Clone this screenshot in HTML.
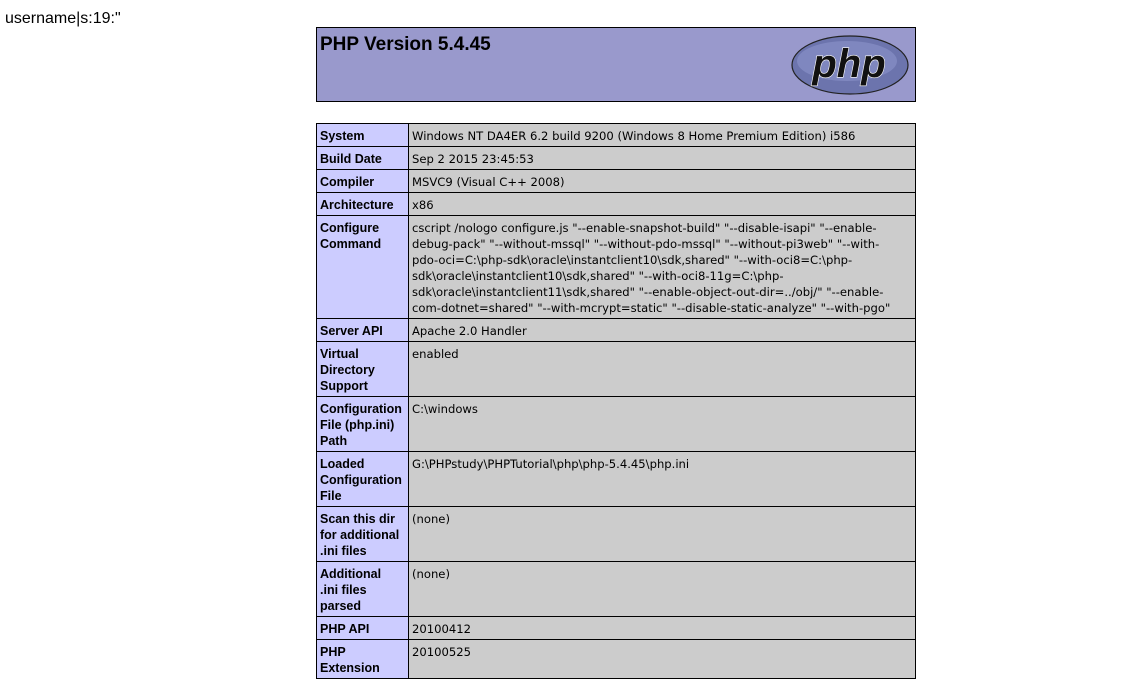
<!DOCTYPE html>
<html><head><meta charset="utf-8"><style>
body{margin:0;background:#fff;font-family:"Liberation Sans",sans-serif;}
.u{position:absolute;left:5px;top:10px;font-size:16px;color:#000;}
.h{position:absolute;left:316px;top:27px;width:598px;height:73px;background:#9999cc;border:1px solid #000;}
.h h1{margin:0;position:absolute;left:3px;top:6px;font-size:19px;font-weight:bold;}
.h svg{position:absolute;right:4px;top:7px;}
table{position:absolute;left:316px;top:123px;width:600px;border-collapse:collapse;}
td{border:1px solid #000;padding:4px 3px 2px 3px;vertical-align:top;line-height:16px;font-size:12px;}
td.e{background:#ccccff;font-weight:bold;width:85px;font-family:"Liberation Sans",sans-serif;font-size:12.5px;}
td.v{background:#cccccc;font-family:"DejaVu Sans",sans-serif;font-size:11.6px;}
.nw{white-space:nowrap;}
</style></head><body>
<div class="u">username|s:19:"</div>
<div class="h"><h1>PHP Version 5.4.45</h1>
<svg width="120" height="60" viewBox="0 0 120 60"><ellipse cx="59" cy="30" rx="58" ry="29" fill="#6c74ad" stroke="#222" stroke-width="1.2"/><ellipse cx="56" cy="26" rx="50" ry="20" fill="#7f87bf"/><text x="58" y="42" text-anchor="middle" font-family="Liberation Sans,sans-serif" font-weight="bold" font-style="italic" font-size="40" fill="#111" stroke="#fff" stroke-width="1.2" paint-order="stroke">php</text></svg></div>
<table>
<tr><td class="e">System</td><td class="v">Windows NT DA4ER 6.2 build 9200 (Windows 8 Home Premium Edition) i586</td></tr>
<tr><td class="e">Build Date</td><td class="v">Sep 2 2015 23:45:53</td></tr>
<tr><td class="e">Compiler</td><td class="v">MSVC9 (Visual C++ 2008)</td></tr>
<tr><td class="e">Architecture</td><td class="v">x86</td></tr>
<tr><td class="e">Configure Command</td><td class="v nw">cscript /nologo configure.js "--enable-snapshot-build" "--disable-isapi" "--enable-<br>debug-pack" "--without-mssql" "--without-pdo-mssql" "--without-pi3web" "--with-<br>pdo-oci=C:\php-sdk\oracle\instantclient10\sdk,shared" "--with-oci8=C:\php-<br>sdk\oracle\instantclient10\sdk,shared" "--with-oci8-11g=C:\php-<br>sdk\oracle\instantclient11\sdk,shared" "--enable-object-out-dir=../obj/" "--enable-<br>com-dotnet=shared" "--with-mcrypt=static" "--disable-static-analyze" "--with-pgo"</td></tr>
<tr><td class="e">Server API</td><td class="v">Apache 2.0 Handler</td></tr>
<tr><td class="e">Virtual Directory Support</td><td class="v">enabled</td></tr>
<tr><td class="e">Configuration File (php.ini) Path</td><td class="v">C:\windows</td></tr>
<tr><td class="e">Loaded Configuration File</td><td class="v">G:\PHPstudy\PHPTutorial\php\php-5.4.45\php.ini</td></tr>
<tr><td class="e">Scan this dir for additional .ini files</td><td class="v">(none)</td></tr>
<tr><td class="e">Additional<br>.ini files<br>parsed</td><td class="v">(none)</td></tr>
<tr><td class="e">PHP API</td><td class="v">20100412</td></tr>
<tr><td class="e">PHP Extension</td><td class="v">20100525</td></tr>
</table>
</body></html>
